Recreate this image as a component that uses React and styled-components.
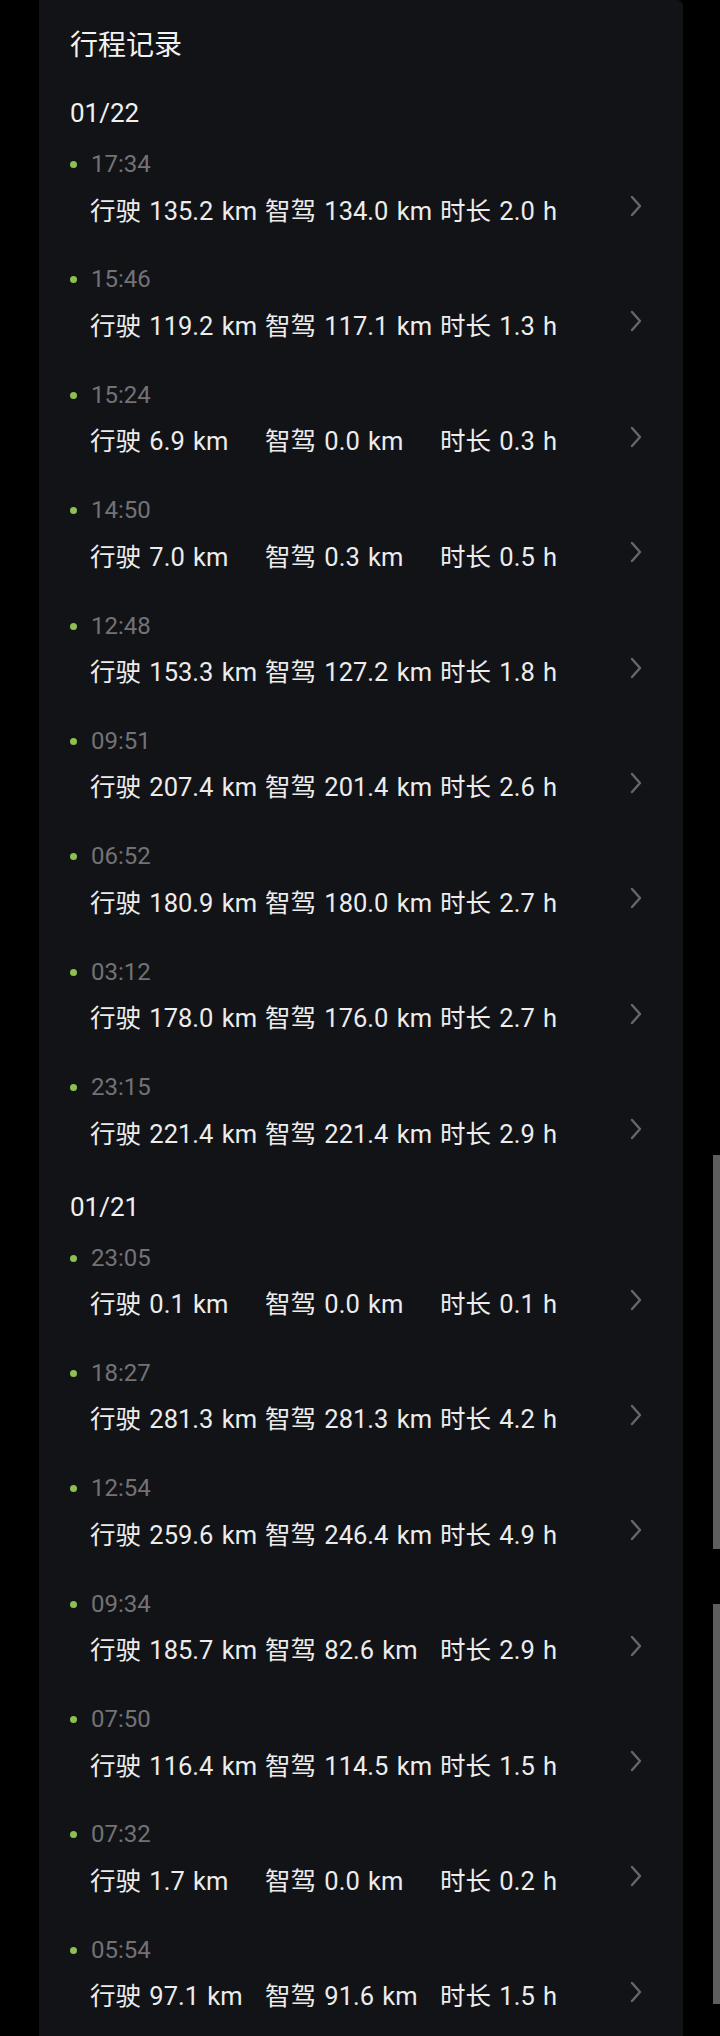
import React from 'react'
import styled, { createGlobalStyle } from 'styled-components'

const GlobalStyle = createGlobalStyle`
  html, body {
    margin: 0;
    padding: 0;
    background: #000;
  }
  body {
    font-family: Roboto, "Noto Sans CJK SC", sans-serif;
    -webkit-font-smoothing: antialiased;
  }
`

const Screen = styled.div`
  display: flex;
  width: 720px;
  height: 2036px;
  overflow: hidden;
  background: #000;
`

const Panel = styled.div`
  margin-left: 39px;
  width: 644px;
  flex-shrink: 0;
  background: #121317;
  border-top-right-radius: 6px;
  padding: 26px 40px 0 31px;
  box-sizing: border-box;
`

const Title = styled.h1`
  margin: 0 0 27px;
  font-size: 28px;
  font-weight: 400;
  line-height: 40px;
  color: #f2f2f2;
`

const Group = styled.section`
  margin-bottom: 2px;
`

const DateLabel = styled.div`
  font-size: 26px;
  line-height: 40px;
  color: #f0f0f0;
  margin-bottom: 13px;
`

const Item = styled.div`
  height: 115.4px;
`

const TimeLine = styled.div`
  display: flex;
  align-items: center;
  height: 36px;
  font-size: 24px;
  color: #727276;
`

const Dot = styled.span`
  width: 7px;
  height: 7px;
  border-radius: 50%;
  background: #8cc152;
  margin-right: 14px;
  margin-top: 1px;
`

const Row = styled.div`
  display: flex;
  align-items: center;
  height: 40px;
  margin-top: 6px;
  padding-left: 20px;
  font-size: 25.5px;
  word-spacing: 2px;
  color: #ececec;
  white-space: nowrap;
`

const Cell = styled.span`
  flex: 0 0 ${({ w }) => w}px;
  white-space: nowrap;
`

const Chevron = styled.svg`
  margin-left: auto;
  margin-top: -4px;
  flex-shrink: 0;
`

const Track = styled.div`
  display: flex;
  flex-direction: column;
  margin-left: 30px;
  width: 7px;
`

const Thumb = styled.div`
  width: 7px;
  height: ${({ h }) => h}px;
  margin-top: ${({ top }) => top}px;
  background: #5e5e5e;
`

const groups = [
  {
    date: '01/22',
    trips: [
      ['17:34', '135.2', '134.0', '2.0'],
      ['15:46', '119.2', '117.1', '1.3'],
      ['15:24', '6.9', '0.0', '0.3'],
      ['14:50', '7.0', '0.3', '0.5'],
      ['12:48', '153.3', '127.2', '1.8'],
      ['09:51', '207.4', '201.4', '2.6'],
      ['06:52', '180.9', '180.0', '2.7'],
      ['03:12', '178.0', '176.0', '2.7'],
      ['23:15', '221.4', '221.4', '2.9'],
    ],
  },
  {
    date: '01/21',
    trips: [
      ['23:05', '0.1', '0.0', '0.1'],
      ['18:27', '281.3', '281.3', '4.2'],
      ['12:54', '259.6', '246.4', '4.9'],
      ['09:34', '185.7', '82.6', '2.9'],
      ['07:50', '116.4', '114.5', '1.5'],
      ['07:32', '1.7', '0.0', '0.2'],
      ['05:54', '97.1', '91.6', '1.5'],
    ],
  },
]

const Trip = ({ time, dist, auto, dur }) => (
  <Item>
    <TimeLine>
      <Dot />
      {time}
    </TimeLine>
    <Row>
      <Cell w={175}>行驶 {dist} km</Cell>
      <Cell w={175}>智驾 {auto} km</Cell>
      <Cell w={150}>时长 {dur} h</Cell>
      <Chevron width="14" height="22" viewBox="0 0 14 22">
        <polyline points="3,2 11,11 3,20" fill="none" stroke="#67676b" strokeWidth="2.4" strokeLinecap="round" strokeLinejoin="round" />
      </Chevron>
    </Row>
  </Item>
)

const App = () => {
  return (
    <>
      <GlobalStyle />
      <Screen>
        <Panel>
          <Title>行程记录</Title>
          {groups.map((g) => (
            <Group key={g.date}>
              <DateLabel>{g.date}</DateLabel>
              {g.trips.map(([time, dist, auto, dur]) => (
                <Trip key={g.date + time} time={time} dist={dist} auto={auto} dur={dur} />
              ))}
            </Group>
          ))}
        </Panel>
        <Track>
          <Thumb top={1155} h={394} />
          <Thumb top={55} h={400} />
        </Track>
      </Screen>
    </>
  )
}

export default App
